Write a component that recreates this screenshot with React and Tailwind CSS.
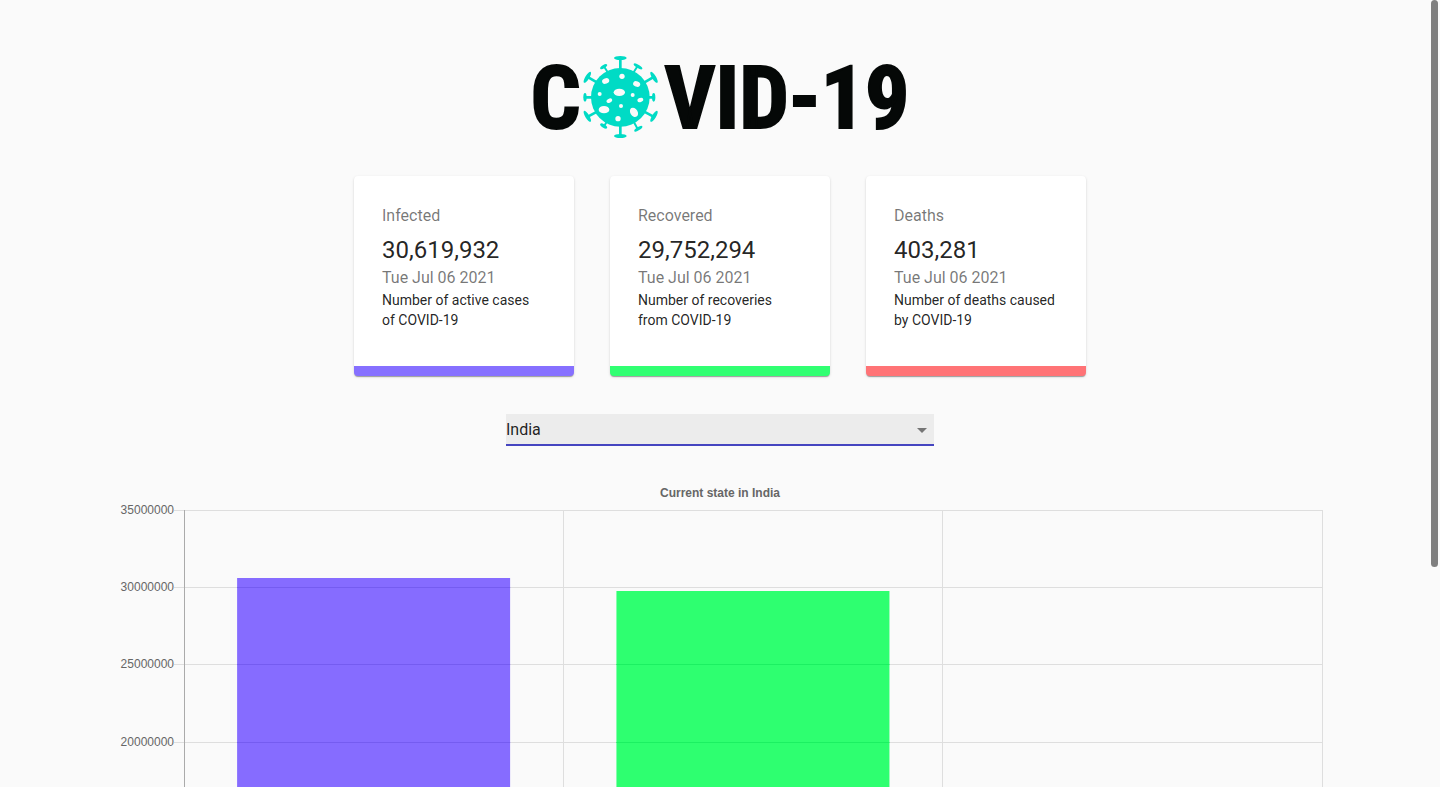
const stats = [
  {
    title: "Infected",
    value: 30619932,
    lines: ["Number of active cases", "of COVID-19"],
    border: "border-[#8670ff]",
    fill: "#866cff",
    line: "#755cf0",
  },
  {
    title: "Recovered",
    value: 29752294,
    lines: ["Number of recoveries", "from COVID-19"],
    border: "border-[#31ff72]",
    fill: "#2eff70",
    line: "#1cf062",
  },
  {
    title: "Deaths",
    value: 403281,
    lines: ["Number of deaths caused", "by COVID-19"],
    border: "border-[#ff7376]",
    fill: "#ff7073",
    line: "#ee6063",
  },
];

function Virus() {
  return (
    <svg viewBox="0 0 264 276" className="-ml-1 h-[92px] w-[88px] shrink-0" aria-hidden="true">
      <g stroke="#00dbc5" strokeLinecap="round" fill="none">
        <path strokeWidth="8" d="M130 24V60M130 222V258M26 142H50M210 142H230M34 82L66 101M228 82L196 101M34 199L66 182M228 199L196 182" />
        <path strokeWidth="6" d="M82 51L94 70M180 51L168 70M82 227L94 208M180 233L166 208" />
      </g>
      <g fill="#00dbc5">
        <circle cx="130" cy="142" r="88" />
        <ellipse cx="130" cy="24" rx="19" ry="6" />
        <ellipse cx="130" cy="258" rx="19" ry="6" />
        <ellipse cx="24" cy="142" rx="5" ry="13" />
        <ellipse cx="230" cy="142" rx="5" ry="13" />
        <ellipse cx="31" cy="82" rx="6" ry="19" transform="rotate(32 31 82)" />
        <ellipse cx="231" cy="82" rx="6" ry="19" transform="rotate(-32 231 82)" />
        <ellipse cx="31" cy="199" rx="6" ry="19" transform="rotate(-32 31 199)" />
        <ellipse cx="231" cy="199" rx="6" ry="19" transform="rotate(32 231 199)" />
        <ellipse cx="80" cy="50" rx="12" ry="5" transform="rotate(-32 80 50)" />
        <ellipse cx="183" cy="49" rx="15" ry="5" transform="rotate(32 183 49)" />
        <ellipse cx="80" cy="228" rx="12" ry="5" transform="rotate(32 80 228)" />
        <ellipse cx="184" cy="236" rx="14" ry="5" transform="rotate(-32 184 236)" />
      </g>
      <g fill="#fafafa">
        <ellipse cx="86" cy="93" rx="11" ry="8" transform="rotate(-20 86 93)" />
        <circle cx="135" cy="79" r="8" />
        <ellipse cx="179" cy="102" rx="11" ry="8" transform="rotate(22 179 102)" />
        <ellipse cx="127" cy="127" rx="17" ry="11" />
        <circle cx="68" cy="132" r="6" />
        <circle cx="167" cy="135" r="6" />
        <ellipse cx="97" cy="152" rx="9" ry="6" transform="rotate(-28 97 152)" />
        <ellipse cx="190" cy="150" rx="9" ry="6" transform="rotate(-20 190 150)" />
        <ellipse cx="81" cy="179" rx="16" ry="11" />
        <circle cx="132" cy="168" r="6" />
        <ellipse cx="171" cy="187" rx="11" ry="15" transform="rotate(-32 171 187)" />
        <circle cx="123" cy="206" r="8" />
      </g>
    </svg>
  );
}

function Logo() {
  return (
    <h1
      aria-label="COVID-19"
      className="flex h-[92px] items-center justify-center font-['Roboto_Condensed',Roboto,sans-serif] text-[88px] leading-none font-bold text-[#050807] [-webkit-text-stroke:2px_#050807]"
    >
      <span className="pt-1">C</span>
      <Virus />
      <span className="pt-1">VID-19</span>
    </h1>
  );
}

function StatCard({ title, value, lines, border }) {
  return (
    <section
      className={`w-[220px] rounded-sm border-b-10 bg-white px-7 pt-7 pb-9 shadow-[0_2px_1px_-1px_rgba(0,0,0,0.2),0_1px_1px_0_rgba(0,0,0,0.14),0_1px_3px_0_rgba(0,0,0,0.12)] ${border}`}
    >
      <h2 className="mb-1.5 text-base leading-6 text-black/54">{title}</h2>
      <p className="text-2xl leading-8">{value.toLocaleString("en-US")}</p>
      <p className="text-base leading-6 text-black/54">Tue Jul 06 2021</p>
      <p className="text-sm leading-5 whitespace-nowrap">
        {lines[0]}
        <br />
        {lines[1]}
      </p>
    </section>
  );
}

function Chart() {
  const left = 76;
  const right = 1214;
  const top = 34;
  const bottom = 576;
  const max = 35000000;
  const y = (v) => Math.floor(bottom - (v / max) * (bottom - top));
  const barTop = (v) => Math.round(bottom - (v / max) * (bottom - top));
  const ticks = [0, 1, 2, 3, 4, 5, 6, 7].map((n) => n * 5000000);
  const col = (right - left) / 3;
  return (
    <svg
      viewBox="0 0 1224 612"
      className="block w-full font-['Liberation_Sans',Arial,sans-serif]"
      fontSize="12"
      fill="#666666"
      role="img"
      aria-label="Current state in India"
    >
      <text x="612" y="21" textAnchor="middle" fontWeight="bold">
        Current state in India
      </text>
      {ticks.map((t) => (
        <g key={t}>
          <rect x={left - 10} y={y(t)} width={right - left + 11} height="1" fill="#dedede" />
          <text x={left - 10} y={y(t) + 4} textAnchor="end">
            {t}
          </text>
        </g>
      ))}
      {[0, 1, 2, 3].map((n) => (
        <rect
          key={n}
          x={Math.floor(left + n * col)}
          y={top}
          width="1"
          height={bottom - top + 10}
          fill={n === 0 ? "#aaaaaa" : "#dedede"}
        />
      ))}
      {stats.map((s, i) => {
        const x = left + col * (i + 0.14);
        return (
          <g key={s.title}>
            <rect x={x} y={barTop(s.value)} width="273" height={bottom - barTop(s.value)} fill={s.fill} />
            {ticks
              .filter((t) => t > 0 && t < s.value)
              .map((t) => (
                <rect key={t} x={x} y={y(t)} width="273" height="1" fill={s.line} />
              ))}
            <text x={left + col * (i + 0.5)} y={bottom + 22} textAnchor="middle">
              {s.title}
            </text>
          </g>
        );
      })}
    </svg>
  );
}

export default function App() {
  return (
    <div className="min-h-screen bg-[#fafafa] font-[Roboto,sans-serif] text-black/87">
      <main className="flex flex-col items-center pt-[50px]">
        <Logo />
        <div className="mt-[34px] flex flex-wrap justify-center gap-9">
          {stats.map((s) => (
            <StatCard key={s.title} {...s} />
          ))}
        </div>
        <div className="relative mt-[38px] w-[428px] max-w-full">
          <select
            aria-label="Country"
            defaultValue="India"
            className="block h-8 w-full appearance-none rounded-none border-b-2 border-[#4545c0] bg-[#ececec] pt-0.5 pr-6 text-base leading-6 outline-none"
          >
            <option>Global</option>
            <option>India</option>
          </select>
          <svg
            viewBox="0 0 24 24"
            className="pointer-events-none absolute top-1 right-0 size-6"
            fill="#757575"
            aria-hidden="true"
          >
            <path d="M7 10l5 5 5-5z" />
          </svg>
        </div>
        <div className="mt-[30px] w-[85%]">
          <Chart />
        </div>
      </main>
      <div
        aria-hidden="true"
        className="fixed top-0 right-0.5 h-[72%] w-[7px] rounded-full bg-[#7f7f7f]"
      />
    </div>
  );
}
